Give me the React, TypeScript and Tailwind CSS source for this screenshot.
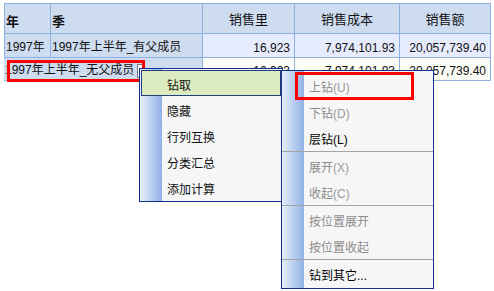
import React from 'react';

const font = { fontFamily: '"Liberation Sans", "Noto Sans CJK SC", sans-serif' };

const head = 'bg-[#cedcf0] flex';
const rowHead = 'bg-[#cedcf0] flex items-end pb-[1px] pl-[1px]';

function Num({ value, bg }: { value: string; bg: string }) {
  return <div className={`${bg} flex items-end justify-end pb-[1px] pr-[4px] leading-4`}>{value}</div>;
}

type Entry = { label: string; key?: string; disabled?: boolean } | 'sep';

function MenuItem({ label, keyHint, disabled, pad }: { label: string; keyHint?: string; disabled?: boolean; pad: string }) {
  return (
    <div className={`h-[26px] flex items-center pl-[27px] ${pad} ${disabled ? 'text-[#8c8c8c]' : 'text-black'}`}>
      {label}
      {keyHint && <span className={disabled ? 'text-[#9c9c9c]' : ''}>({keyHint})</span>}
    </div>
  );
}

const drill: Entry[] = [
  { label: '上钻', key: 'U', disabled: true },
  { label: '下钻', key: 'D', disabled: true },
  { label: '层钻', key: 'L' },
  'sep',
  { label: '展开', key: 'X', disabled: true },
  { label: '收起', key: 'C', disabled: true },
  'sep',
  { label: '按位置展开', disabled: true },
  { label: '按位置收起', disabled: true },
  'sep',
  { label: '钻到其它...' },
];

export default function App() {
  return (
    <div className="relative w-[494px] h-[291px] bg-white text-[12px] text-[#111] overflow-hidden" style={font}>
      <div className="pt-[3px] pl-[4px]">
        <div className="inline-grid grid-cols-[45px_151px_91px_104px_90px] grid-rows-[29px_23px_22px] gap-px p-px bg-[#8cb2e2]">
          <div className={`${head} items-end pb-[2px] pl-[1px] text-[13px] font-bold`}>年</div>
          <div className={`${head} items-end pb-[2px] pl-[1px] text-[13px] font-bold`}>季</div>
          <div className={`${head} items-center justify-center pt-[2px] text-[13px]`}>销售里</div>
          <div className={`${head} items-center justify-center pt-[2px] text-[13px]`}>销售成本</div>
          <div className={`${head} items-center justify-center pt-[2px] text-[13px]`}>销售额</div>

          <div className={rowHead}>1997年</div>
          <div className={rowHead}>1997年上半年_有父成员</div>
          <Num value="16,923" bg="bg-[#e6ecfd]" />
          <Num value="7,974,101.93" bg="bg-[#e6ecfd]" />
          <Num value="20,057,739.40" bg="bg-[#e6ecfd]" />

          <div className={`${rowHead} col-span-2 -ml-px pl-0`}>
            <span>1997年上半年_无父成员</span>
            <span className="ml-[3px] mb-[1px] w-[7px] h-[14px] border border-[#7a7a7a] bg-white" />
          </div>
          <Num value="16,923" bg="bg-[#fcfcf6]" />
          <Num value="7,974,101.93" bg="bg-[#fcfcf6]" />
          <Num value="20,057,739.40" bg="bg-[#fcfcf6]" />
        </div>
      </div>

      {/* annotation round the row member */}
      <div className="absolute left-[7px] top-[60px] w-[138px] h-[22px] border-[3px] border-[#ff0000]" />

      {/* context menu */}
      <div className="absolute left-[139px] top-[68px] w-[144px] border border-[#10328c] bg-[linear-gradient(to_right,#e6effd,#92b2e6_22px,#f6f6f6_22px)] pt-[1px] pb-[1px]">
        <div className="mx-px h-[26px] flex items-center pt-[6px] pl-[25px] bg-[#dcebc0] border border-[#1f3f80]">钻取</div>
        {['隐藏', '行列互换', '分类汇总', '添加计算'].map((t) => (
          <div key={t} className="h-[26px] flex items-center pt-[6px] pl-[27px]">{t}</div>
        ))}
      </div>

      {/* drill submenu */}
      <div className="absolute left-[281px] top-[70px] w-[153px] border border-[#10328c] bg-[linear-gradient(to_right,#e6effd,#92b2e6_22px,#f6f6f6_22px)] pt-[2px] pb-px">
        {drill.map((e, i) =>
          e === 'sep' ? (
            <div key={i} className="h-[2px] border-t border-[#a4a4a4]" />
          ) : (
            <MenuItem key={i} label={e.label} keyHint={e.key} disabled={e.disabled} pad="pt-[4px]" />
          )
        )}
      </div>

      <div className="absolute left-[295px] top-[72px] w-[119px] h-[28px] border-[3px] border-[#ff0000]" />
    </div>
  );
}
